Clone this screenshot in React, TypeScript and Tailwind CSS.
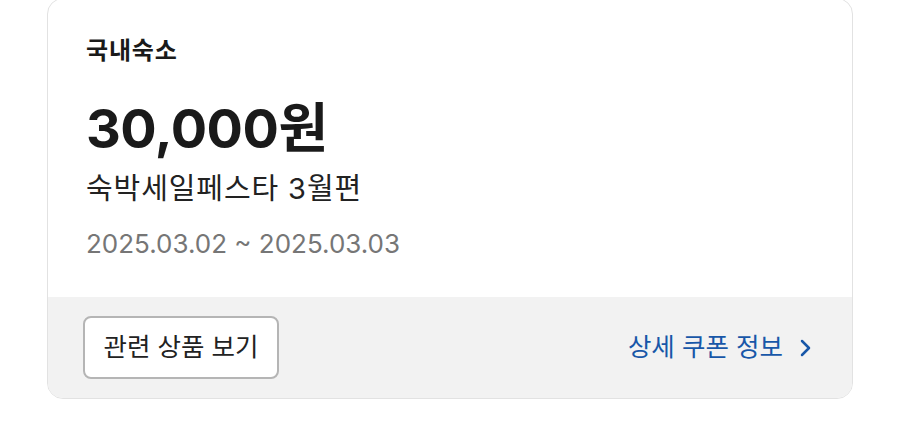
import React from 'react';

const font = { fontFamily: 'Inter, "Noto Sans CJK KR", sans-serif' };

const ChevronRight: React.FC = () => (
  <svg width="12" height="20" viewBox="0 0 12 20" fill="none" className="ml-[17px]">
    <path d="M2 3l7 7-7 7" stroke="currentColor" strokeWidth="2.5" strokeLinecap="round" strokeLinejoin="round" />
  </svg>
);

const CouponCard: React.FC = () => {
  return (
    <div className="w-[806px] mx-auto -mt-[2px] rounded-2xl border border-[#e2e2e2] bg-white overflow-hidden">
      {/* Body */}
      <div className="pl-[38px] pr-[38px] pt-[36px] h-[298px]">
        <p className="text-[24px] leading-[32px] font-bold tracking-[0.8px] text-[#1a1a1a]">국내숙소</p>
        <p className="mt-[30px] text-[54px] leading-[64px] font-bold tracking-[-0.5px] text-[#1a1a1a]">30,000원</p>
        <p className="mt-[10px] text-[29px] leading-[36px] tracking-[0.9px] text-[#222]">숙박세일페스타 3월편</p>
        <p className="mt-[19px] text-[26px] leading-[36px] text-[#767676]">2025.03.02 ~ 2025.03.03</p>
      </div>

      {/* Footer */}
      <div className="bg-[#f2f2f2] h-[101px] pl-[35px] pr-[40px] flex items-center justify-between">
        <button className="h-[63px] w-[196px] rounded-lg border-2 border-[#b5b5b5] bg-white text-[25.5px] text-[#222] flex items-center justify-center">
          관련 상품 보기
        </button>
        <a className="flex items-center text-[25.5px] text-[#1857a8]">
          상세 쿠폰 정보
          <ChevronRight />
        </a>
      </div>
    </div>
  );
};

export default function App() {
  return (
    <div className="w-[900px] h-[436px] bg-white overflow-hidden" style={font}>
      <CouponCard />
    </div>
  );
}
